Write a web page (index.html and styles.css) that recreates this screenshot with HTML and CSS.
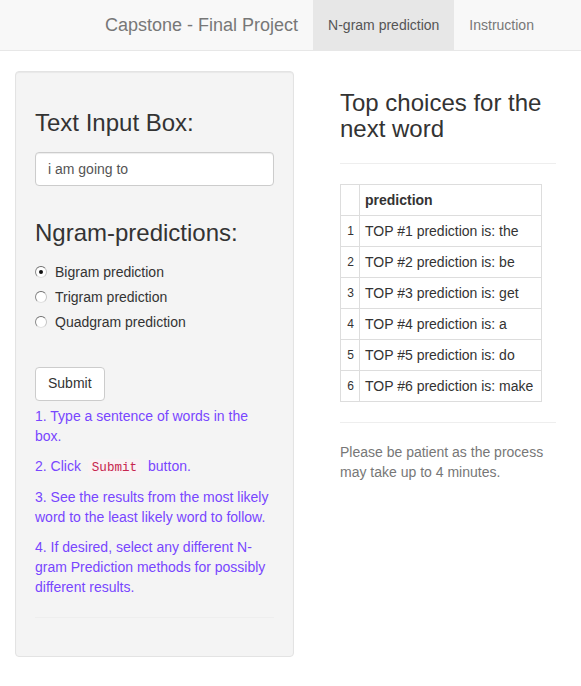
FILE: index.html
```html
<!DOCTYPE html>
<html>
<head>
<meta charset="utf-8">
<title>Capstone - Final Project</title>
<link rel="stylesheet" href="styles.css">
</head>
<body>
<nav class="navbar">
  <span class="brand">Capstone - Final Project</span>
  <ul class="nav">
    <li class="active"><a>N-gram prediction</a></li>
    <li><a>Instruction</a></li>
  </ul>
</nav>
<div class="layout">
  <aside class="well">
    <h3 class="title">Text Input Box:</h3>
    <input class="text-input" type="text" value="i am going to">
    <h3 class="title title-second">Ngram-predictions:</h3>
    <div class="radios">
      <label class="radio"><span class="dot checked"></span>Bigram prediction</label>
      <label class="radio"><span class="dot"></span>Trigram prediction</label>
      <label class="radio"><span class="dot"></span>Quadgram prediction</label>
    </div>
    <button class="btn" type="button">Submit</button>
    <div class="help">
      <p>1. Type a sentence of words in the box.</p>
      <p>2. Click <code>Submit</code> button.</p>
      <p>3. See the results from the most likely word to the least likely word to follow.</p>
      <p>4. If desired, select any different N-gram Prediction methods for possibly different results.</p>
    </div>
    <hr class="rule rule-well">
  </aside>
  <main class="main">
    <h3 class="main-title">Top choices for the next word</h3>
    <hr class="rule">
    <table class="results">
      <thead>
        <tr><th class="idx"></th><th class="pred">prediction</th></tr>
      </thead>
      <tbody>
        <tr><td class="idx">1</td><td>TOP #1 prediction is: the</td></tr>
        <tr><td class="idx">2</td><td>TOP #2 prediction is: be</td></tr>
        <tr><td class="idx">3</td><td>TOP #3 prediction is: get</td></tr>
        <tr><td class="idx">4</td><td>TOP #4 prediction is: a</td></tr>
        <tr><td class="idx">5</td><td>TOP #5 prediction is: do</td></tr>
        <tr><td class="idx">6</td><td>TOP #6 prediction is: make</td></tr>
      </tbody>
    </table>
    <hr class="rule rule-after">
    <p class="note">Please be patient as the process may take up to 4 minutes.</p>
  </main>
</div>
</body>
</html>
```

FILE: styles.css
```css
* { box-sizing: border-box; }

html, body {
  margin: 0;
  padding: 0;
  background: #fff;
}

body {
  font-family: "Liberation Sans", Arial, Helvetica, sans-serif;
  font-size: 14px;
  line-height: 1.42857;
  color: #333;
}

.navbar {
  display: flex;
  align-items: stretch;
  height: 51px;
  padding-left: 90px;
  background: #f8f8f8;
  border-bottom: 1px solid #e7e7e7;
}

.brand {
  padding: 15px;
  font-size: 18px;
  line-height: 20px;
  color: #777;
}

.nav {
  display: flex;
  margin: 0;
  padding: 0;
  list-style: none;
}

.nav a {
  display: block;
  padding: 15px;
  line-height: 20px;
  color: #777;
}

.nav .active a {
  background: #e7e7e7;
  color: #555;
}

.layout {
  display: grid;
  grid-template-columns: 279px 1fr;
  column-gap: 46px;
  align-items: start;
  padding: 20px 25px 0 15px;
}

.well {
  min-height: 20px;
  padding: 19px;
  background: #f4f4f4;
  border: 1px solid #e3e3e3;
  border-radius: 4px;
  box-shadow: inset 0 1px 1px rgba(0, 0, 0, 0.05);
}

.title {
  margin: 19px 0 16px;
  font-size: 24px;
  font-weight: 500;
  line-height: 1.1;
  color: #333;
}

.title-second {
  margin-top: 34px;
  margin-bottom: 15px;
}

.text-input {
  display: block;
  width: 100%;
  height: 34px;
  padding: 6px 12px;
  font-family: inherit;
  font-size: 14px;
  line-height: 1.42857;
  color: #555;
  background: #fff;
  border: 1px solid #ccc;
  border-radius: 4px;
  box-shadow: inset 0 1px 1px rgba(0, 0, 0, 0.075);
}

.radios {
  display: flex;
  flex-direction: column;
  gap: 5px;
}

.radio {
  display: flex;
  align-items: center;
  height: 20px;
  line-height: 20px;
  color: #333;
}

.dot {
  flex: none;
  position: relative;
  width: 12px;
  height: 12px;
  margin-right: 8px;
  border-radius: 50%;
  border: 1px solid;
  border-color: #6d6d6d #c4c4c4 #e0e0e0 #8a8a8a;
  background: #fff;
}

.dot.checked::after {
  content: "";
  position: absolute;
  left: 3px;
  top: 3px;
  width: 4px;
  height: 4px;
  border-radius: 50%;
  background: #111;
}

.btn {
  display: block;
  margin-top: 35px;
  padding: 6px 12px;
  height: 34px;
  font-family: inherit;
  font-size: 14px;
  line-height: 1.42857;
  color: #333;
  background: #fff;
  border: 1px solid #ccc;
  border-radius: 4px;
}

.help {
  margin-top: 6px;
  color: #7846ff;
}

.help p {
  margin: 0 0 10px;
}

.help p:last-child {
  margin-bottom: 0;
}

.help code {
  padding: 2px 4px;
  font-family: "Liberation Mono", "Courier New", monospace;
  font-size: 90%;
  color: #c7254e;
  background: #f9f2f4;
  border-radius: 4px;
  margin: 0 3px;
}

.rule {
  margin: 20px 0;
  border: 0;
  border-top: 1px solid #eee;
}

.rule-well {
  margin: 19px 0 19px;
}

.main-title {
  margin: 19px 0 0;
  font-size: 24px;
  font-weight: 500;
  line-height: 1.1;
  color: #333;
}

.results {
  border-collapse: collapse;
  border: 1px solid #ddd;
  margin-bottom: 20px;
}

.results th,
.results td {
  padding: 5px;
  line-height: 20px;
  border: 1px solid #ddd;
  text-align: left;
  vertical-align: top;
}

.results th {
  font-weight: bold;
}

.results .pred {
  width: 182px;
}

.results .idx {
  width: 19px;
  font-size: 12px;
  text-align: right;
  padding: 5px;
}

.rule-after {
  margin-top: 20px;
}

.note {
  margin: 0;
  color: #777;
}
```
